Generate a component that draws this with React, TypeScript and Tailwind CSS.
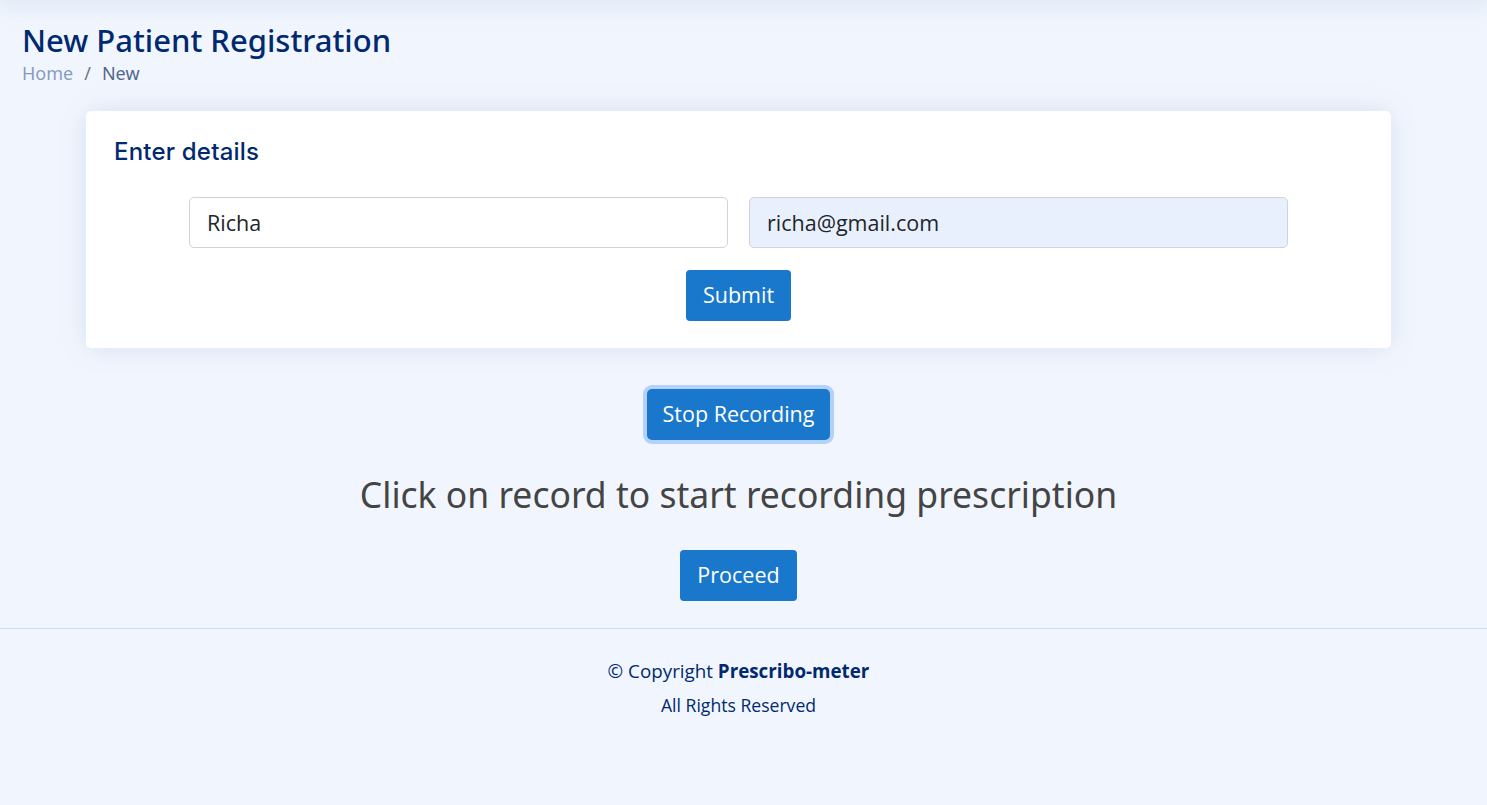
import React, { useState } from 'react';

const App: React.FC = () => {
  const [name, setName] = useState('Richa');
  const [email, setEmail] = useState('richa@gmail.com');

  return (
    <div
      className="min-h-[805px] bg-[#f1f6fe] text-[#444444]"
      style={{ fontFamily: '"Open Sans", sans-serif' }}
    >
      {/* header sits just above the view, only its shadow shows */}
      <div className="h-0 shadow-[0_0_22px_8px_rgba(1,41,112,0.08)]" />

      <main className="pl-[22px] pr-[32px] pt-[22px]">
        {/* Page title */}
        <div className="mb-[26px]">
          <h1
            className="text-[31px] leading-[36px] font-medium text-[#012970]"
            style={{ fontFamily: '"Noto Sans", Lato, sans-serif' }}
          >
            New Patient Registration
          </h1>
          <nav
            className="mt-[3px] flex items-center text-[18px] leading-[24px]"
            style={{ fontFamily: '"Noto Sans", Lato, sans-serif' }}
          >
            <span className="text-[#899bbd]">Home</span>
            <span className="px-[11px] text-[#6c757d]">/</span>
            <span className="text-[#51678f]">New</span>
          </nav>
        </div>

        {/* Details card */}
        <section className="mx-[64px] rounded-[5px] bg-white px-[28px] pt-[25px] pb-[27px] shadow-[0_0_30px_rgba(1,41,112,0.1)]">
          <h5
            className="text-[24px] leading-[32px] font-medium tracking-[0.2px] text-[#012970]"
            style={{ fontFamily: 'Inter, "Noto Sans", sans-serif' }}
          >
            Enter details
          </h5>
          <div className="mt-[29px] flex justify-center gap-[21px]">
            <input
              value={name}
              onChange={(e) => setName(e.target.value)}
              className="h-[51px] w-[539px] rounded-[5px] border border-[#ced4da] bg-white px-[17px] text-[21.5px] text-[#212529] outline-none"
            />
            <input
              value={email}
              onChange={(e) => setEmail(e.target.value)}
              className="h-[51px] w-[539px] rounded-[5px] border border-[#ced4da] bg-[#e8f0fe] px-[17px] text-[21.5px] text-[#212529] outline-none"
            />
          </div>
          <div className="mt-[22px] flex justify-center">
            <button className="h-[51px] rounded-[4px] bg-[#1977cc] px-[17px] text-[21.5px] text-white">
              Submit
            </button>
          </div>
        </section>

        {/* Recording controls */}
        <div className="flex flex-col items-center">
          <button className="mt-[41px] h-[51px] rounded-[5px] bg-[#1977cc] px-[16px] text-[21.5px] text-white ring-4 ring-[#b3d1fb]">
            Stop Recording
          </button>
          <h2
            className="mt-[33px] text-[35.5px] leading-[42px] text-[#444444]"
            style={{ fontFamily: '"Noto Sans", Lato, sans-serif' }}
          >
            Click on record to start recording prescription
          </h2>
          <button className="mt-[35px] h-[51px] rounded-[4px] bg-[#1977cc] px-[17px] text-[21.5px] text-white">
            Proceed
          </button>
        </div>
      </main>

      {/* Footer */}
      <footer className="mt-[27px] border-t border-[#c4dcf7] pt-[29px] text-center text-[#012970]">
        <div className="pr-[10px]">
          <div className="text-[18.8px] leading-[26px]">
            © Copyright <strong className="font-bold">Prescribo-meter</strong>
          </div>
          <div className="mt-[9px] text-[17.6px] leading-[24px]">All Rights Reserved</div>
        </div>
      </footer>
    </div>
  );
};

export default App;
